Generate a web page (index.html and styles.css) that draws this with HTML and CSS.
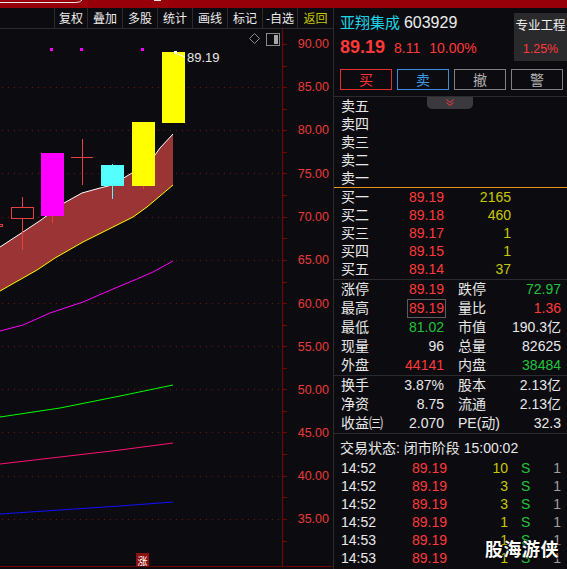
FILE: index.html
```html
<!DOCTYPE html>
<html lang="zh">
<head>
<meta charset="utf-8">
<link rel="stylesheet" href="styles.css">
</head>
<body>
<div class="topbar">
  <svg width="567" height="8" viewBox="0 0 567 8"><path d="M0 2.5 H76 Q80 2.5 82 0" stroke="#e8e8e8" stroke-width="1" fill="none"/><rect x="154" y="0" width="7" height="1" fill="#e8e8e8"/></svg>
</div>
<div class="main">
  <div class="left">
    <div class="toolbar">
      <span class="tb w33">复权</span><span class="tb">叠加</span><span class="tb">多股</span><span class="tb">统计</span><span class="tb">画线</span><span class="tb">标记</span><span class="tb">-自选</span><span class="tb back">返回</span>
    </div>
    <svg class="chart" width="333" height="540" viewBox="0 29 333 540">
      <g class="grid" stroke="#6a1414" stroke-width="1" stroke-dasharray="1 5">
        <line x1="2" y1="87.5" x2="282" y2="87.5"/>
        <line x1="2" y1="130.5" x2="282" y2="130.5"/>
        <line x1="2" y1="173.5" x2="282" y2="173.5"/>
        <line x1="2" y1="217.5" x2="282" y2="217.5"/>
        <line x1="2" y1="260.5" x2="282" y2="260.5"/>
        <line x1="2" y1="303.5" x2="282" y2="303.5"/>
        <line x1="2" y1="346.5" x2="282" y2="346.5"/>
        <line x1="2" y1="389.5" x2="282" y2="389.5"/>
        <line x1="2" y1="432.5" x2="282" y2="432.5"/>
        <line x1="2" y1="476.5" x2="282" y2="476.5"/>
        <line x1="2" y1="519.5" x2="282" y2="519.5"/>
      </g>
      <polygon points="0,247 23,232 41,220 64,203 82,193 100,188 112,185 132,173 150,162 160,148 173,134 173,185 160,196 147,207 133,217 113,227 83,242 55,258 37,270 0,291" fill="#9b3434"/>
      <polyline points="0,247 23,232 41,220 64,203 82,193 100,188 112,185 132,173 150,162 160,148 173,134" fill="none" stroke="#ffffff" stroke-width="1"/>
      <polyline points="173,185 160,196 147,207 133,217 113,227 83,242 55,258 37,270 0,291" fill="none" stroke="#ffff00" stroke-width="1"/>
      <polyline points="0,331 23,325 50,313 83,302 113,289 137,279 153,272 173,261" fill="none" stroke="#ff00ff" stroke-width="1"/>
      <polyline points="0,417 60,408 120,396 173,385" fill="none" stroke="#00ff00" stroke-width="1"/>
      <polyline points="0,464 60,457 120,450 173,443" fill="none" stroke="#ff1070" stroke-width="1"/>
      <polyline points="0,514 60,510 120,506 173,502" fill="none" stroke="#1010ff" stroke-width="1"/>
      <rect x="-2" y="224.5" width="4.5" height="2" fill="none" stroke="#e84040"/>
      <line x1="22.5" y1="197" x2="22.5" y2="207.5" stroke="#e84040"/>
      <line x1="22.5" y1="218.5" x2="22.5" y2="250" stroke="#e84040"/>
      <rect x="11.5" y="207.5" width="22" height="11" fill="#0c0c10" stroke="#e84040"/>
      <line x1="52.5" y1="215" x2="52.5" y2="223" stroke="#e84040"/>
      <rect x="41" y="153" width="23" height="63" fill="#ff00ff"/>
      <line x1="71" y1="157.5" x2="93" y2="157.5" stroke="#e84040"/>
      <line x1="82.5" y1="139" x2="82.5" y2="185" stroke="#e84040"/>
      <line x1="112.5" y1="164" x2="112.5" y2="199" stroke="#55ffff"/>
      <rect x="101" y="165" width="23" height="21" fill="#55ffff"/>
      <line x1="143.5" y1="185" x2="143.5" y2="189" stroke="#e84040"/>
      <rect x="132" y="122" width="23" height="64" fill="#ffff00"/>
      <rect x="162" y="52" width="23" height="71" fill="#ffff00"/>
      <rect x="174" y="51" width="3" height="2" fill="#ffffff"/>
      <polyline points="174,53.5 178,54 185,57" fill="none" stroke="#ffffff" stroke-width="1"/>
      <text x="187" y="57" class="peak">89.19</text>
      <rect x="50" y="48" width="3" height="3" fill="#ff00ff"/>
      <rect x="80" y="48" width="3" height="3" fill="#ff00ff"/>
      <rect x="141" y="48" width="3" height="3" fill="#ff00ff"/>
      <path d="M254.5 33.5 L259.5 38.5 L254.5 43.5 L249.5 38.5 Z" fill="none" stroke="#8a8a8a"/>
      <rect x="266.5" y="33.5" width="13" height="12" fill="none" stroke="#8a8a8a"/>
      <rect x="274" y="35" width="4" height="9" fill="#a8a8a8"/>
      <line x1="282.5" y1="29" x2="282.5" y2="567" stroke="#7a0000"/>
      <line x1="0" y1="566.5" x2="333" y2="566.5" stroke="#6a0000"/>
      <g stroke="#7a0000">
        <line x1="283" y1="44.5" x2="287" y2="44.5"/><line x1="283" y1="66.5" x2="287" y2="66.5"/>
        <line x1="283" y1="87.5" x2="287" y2="87.5"/><line x1="283" y1="109.5" x2="287" y2="109.5"/>
        <line x1="283" y1="130.5" x2="287" y2="130.5"/><line x1="283" y1="152.5" x2="287" y2="152.5"/>
        <line x1="283" y1="173.5" x2="287" y2="173.5"/><line x1="283" y1="195.5" x2="287" y2="195.5"/>
        <line x1="283" y1="217.5" x2="287" y2="217.5"/><line x1="283" y1="238.5" x2="287" y2="238.5"/>
        <line x1="283" y1="260.5" x2="287" y2="260.5"/><line x1="283" y1="282.5" x2="287" y2="282.5"/>
        <line x1="283" y1="303.5" x2="287" y2="303.5"/><line x1="283" y1="325.5" x2="287" y2="325.5"/>
        <line x1="283" y1="346.5" x2="287" y2="346.5"/><line x1="283" y1="368.5" x2="287" y2="368.5"/>
        <line x1="283" y1="389.5" x2="287" y2="389.5"/><line x1="283" y1="411.5" x2="287" y2="411.5"/>
        <line x1="283" y1="432.5" x2="287" y2="432.5"/><line x1="283" y1="454.5" x2="287" y2="454.5"/>
        <line x1="283" y1="476.5" x2="287" y2="476.5"/><line x1="283" y1="497.5" x2="287" y2="497.5"/>
        <line x1="283" y1="519.5" x2="287" y2="519.5"/><line x1="283" y1="541.5" x2="287" y2="541.5"/>
      </g>
      <g class="axis-labels">
        <text x="329" y="44">90.00</text>
        <text x="329" y="87">85.00</text>
        <text x="329" y="130">80.00</text>
        <text x="329" y="174">75.00</text>
        <text x="329" y="217">70.00</text>
        <text x="329" y="260">65.00</text>
        <text x="329" y="304">60.00</text>
        <text x="329" y="347">55.00</text>
        <text x="329" y="390">50.00</text>
        <text x="329" y="433">45.00</text>
        <text x="329" y="476">40.00</text>
        <text x="329" y="519">35.00</text>
      </g>
      <rect x="136" y="553" width="13" height="13" fill="#8b1010"/>
      <text x="142.5" y="560" class="zhang">涨</text>
    </svg>
  </div>
  <div class="panel">
    <div class="head">
      <div class="head-left">
        <div class="name-line"><span class="name">亚翔集成</span> <span class="code">603929</span></div>
        <div class="price-line"><span class="last">89.19</span><span class="chg">8.11</span><span class="chg">10.00%</span></div>
      </div>
      <div class="sector">
        <div class="sector-name">专业工程</div>
        <div class="sector-pct">1.25%</div>
      </div>
    </div>
    <div class="actions">
      <span class="act buy">买</span><span class="act sell">卖</span><span class="act cancel">撤</span><span class="act cancel">警</span>
    </div>
    <div class="book asks">
      <div class="tab"><svg width="12" height="8" viewBox="0 0 12 8"><path d="M2.5 0.5 L6 3.5 L9.5 0.5 M2.5 3.5 L6 6.5 L9.5 3.5" fill="none" stroke="#ff3838" stroke-width="1"/></svg></div>
      <div class="brow"><span>卖五</span><span></span><span></span></div>
      <div class="brow"><span>卖四</span><span></span><span></span></div>
      <div class="brow"><span>卖三</span><span></span><span></span></div>
      <div class="brow"><span>卖二</span><span></span><span></span></div>
      <div class="brow"><span>卖一</span><span></span><span></span></div>
    </div>
    <div class="book bids">
      <div class="brow"><span>买一</span><span class="up r">89.19</span><span class="vol r">2165</span></div>
      <div class="brow"><span>买二</span><span class="up r">89.18</span><span class="vol r">460</span></div>
      <div class="brow"><span>买三</span><span class="up r">89.17</span><span class="vol r">1</span></div>
      <div class="brow"><span>买四</span><span class="up r">89.15</span><span class="vol r">1</span></div>
      <div class="brow"><span>买五</span><span class="up r">89.14</span><span class="vol r">37</span></div>
    </div>
    <div class="stats">
      <div class="srow"><span>涨停</span><span class="up r">89.19</span><span>跌停</span><span class="down r">72.97</span></div>
      <div class="srow"><span>最高</span><span class="r"><span class="boxed">89.19</span></span><span>量比</span><span class="up r">1.36</span></div>
      <div class="srow"><span>最低</span><span class="down r">81.02</span><span>市值</span><span class="r">190.3亿</span></div>
      <div class="srow"><span>现量</span><span class="r">96</span><span>总量</span><span class="r">82625</span></div>
      <div class="srow"><span>外盘</span><span class="up r">44141</span><span>内盘</span><span class="down r">38484</span></div>
    </div>
    <div class="stats">
      <div class="srow"><span>换手</span><span class="r">3.87%</span><span>股本</span><span class="r">2.13亿</span></div>
      <div class="srow"><span>净资</span><span class="r">8.75</span><span>流通</span><span class="r">2.13亿</span></div>
      <div class="srow"><span>收益㈢</span><span class="r">2.070</span><span>PE(动)</span><span class="r">32.3</span></div>
    </div>
    <div class="status">交易状态: 闭市阶段 15:00:02</div>
    <div class="trades">
      <div class="trow"><span>14:52</span><span class="up r">89.19</span><span class="vol r">10</span><span class="s">S</span><span class="n r">1</span></div>
      <div class="trow"><span>14:52</span><span class="up r">89.19</span><span class="vol r">3</span><span class="s">S</span><span class="n r">1</span></div>
      <div class="trow"><span>14:52</span><span class="up r">89.19</span><span class="vol r">3</span><span class="s">S</span><span class="n r">1</span></div>
      <div class="trow"><span>14:52</span><span class="up r">89.19</span><span class="vol r">1</span><span class="s">S</span><span class="n r">1</span></div>
      <div class="trow"><span>14:53</span><span class="up r">89.19</span><span class="vol r">1</span><span class="s">S</span><span class="n r">1</span></div>
      <div class="trow"><span>14:53</span><span class="up r">89.19</span><span class="vol r">1</span><span class="s">S</span><span class="n r">1</span></div>
    </div>
    <div class="watermark">股海游侠</div>
  </div>
</div>
</body>
</html>
```

FILE: styles.css
```css
html, body {
  margin: 0;
  padding: 0;
}
body {
  width: 567px;
  height: 569px;
  overflow: hidden;
  background: #0c0c10;
  color: #e8e8e8;
  font-family: "Liberation Sans", "Noto Sans CJK SC", sans-serif;
}
.topbar {
  height: 8px;
  background: #970008;
}
.topbar svg { display: block; }
.main {
  display: flex;
  height: 561px;
}
.left {
  width: 333px;
  display: flex;
  flex-direction: column;
}
.toolbar {
  height: 20px;
  border-bottom: 1px solid #2c2c30;
  display: flex;
  justify-content: flex-end;
}
.tb {
  width: 34px;
  border-left: 1px solid #2c2c30;
  font-size: 12px;
  line-height: 20px;
  text-align: center;
  color: #ececec;
  font-family: "Noto Sans CJK SC", sans-serif;
}
.tb.w33 { width: 32px; }
.tb.back { width: 35px; color: #c8c800; }
.chart { display: block; }
.axis-labels text {
  font-family: "Liberation Sans", sans-serif;
  font-size: 12.5px;
  fill: #e83a3a;
  text-anchor: end;
  dominant-baseline: central;
}
.peak {
  font-family: "Liberation Sans", sans-serif;
  font-size: 13px;
  fill: #e6e6e6;
  dominant-baseline: central;
}
.zhang {
  font-family: "Noto Sans CJK SC", sans-serif;
  font-size: 10px;
  fill: #ffffff;
  text-anchor: middle;
  dominant-baseline: central;
}
.panel {
  position: relative;
  width: 233px;
  border-left: 1px solid #2c2c30;
  font-size: 14px;
}
.head {
  display: flex;
  justify-content: space-between;
  height: 53px;
  padding-top: 3px;
}
.head-left { padding-left: 6px; }
.name-line {
  height: 22px;
  line-height: 22px;
  white-space: nowrap;
}
.name { color: #1ed6e6; font-size: 15px; font-family: "Noto Sans CJK SC", sans-serif; }
.code { color: #ececec; font-size: 16px; }
.price-line {
  height: 28px;
  line-height: 28px;
  color: #ff3838;
  white-space: nowrap;
}
.last { font-size: 18px; font-weight: bold; margin-right: 9px; }
.chg { font-size: 14px; margin-right: 9px; }
.sector {
  width: 53px;
  height: 48px;
  margin-top: 2px;
  background: #2a2a2c;
  text-align: center;
  font-size: 12.5px;
}
.sector-name {
  line-height: 14px;
  padding-top: 5px;
  color: #f0f0f0;
  font-family: "Noto Sans CJK SC", sans-serif;
}
.sector-pct {
  line-height: 14px;
  padding-top: 10px;
  color: #ff3838;
}
.actions {
  display: flex;
  gap: 5px;
  padding: 5px 0 0 6px;
  height: 21px;
  margin-bottom: 6px;
}
.act {
  width: 50px;
  height: 19px;
  line-height: 19px;
  text-align: center;
  font-size: 14px;
  font-family: "Noto Sans CJK SC", sans-serif;
  border: 1px solid #808080;
  color: #b0b0b0;
}
.act.buy { border-color: #e03030; color: #ff3030; }
.act.sell { border-color: #3a8ee0; color: #3a9ae8; }
.book {
  position: relative;
  border-top: 1px solid #2c2c30;
}
.bids { border-top: 1px solid #e89020; padding-bottom: 1px; }
.tab {
  position: absolute;
  left: 93px;
  top: 0;
  width: 46px;
  height: 12px;
  background: #3a3a3e;
  border-radius: 0 0 5px 5px;
  display: flex;
  justify-content: center;
  align-items: center;
}
.tab svg { display: block; }
.brow {
  display: grid;
  grid-template-columns: 62px 41px 67px;
  padding-left: 7px;
  height: 18px;
  line-height: 18px;
}
.up { color: #ff3838; }
.down { color: #22c33c; }
.vol { color: #c8c800; }
.r { text-align: right; }
.stats {
  border-top: 1px solid #2c2c30;
}
.srow {
  display: grid;
  grid-template-columns: 45px 58px 59px 58px;
  padding-left: 7px;
  height: 19px;
  line-height: 19px;
  white-space: nowrap;
}
.srow > span:nth-child(3) { margin-left: 14px; }
.boxed {
  display: inline-block;
  color: #ff3838;
  border: 1px solid #5c5c60;
  line-height: 17px;
  padding: 0 1px;
  margin-right: -2px;
}
.status {
  border-top: 1px solid #2c2c30;
  line-height: 22px;
  padding: 3px 0 0 6px;
  box-sizing: border-box;
  height: 26px;
  white-space: nowrap;
}
.trow {
  display: grid;
  grid-template-columns: 45px 61px 61px 33px 20px;
  padding-left: 7px;
  height: 18px;
  line-height: 18px;
}
.trow .s { color: #22c33c; padding-left: 13px; }
.trow .n { color: #a0a0a0; }
.watermark {
  position: absolute;
  left: 151px;
  top: 527px;
  font-size: 18px;
  font-weight: bold;
  color: #ffffff;
  font-family: "Noto Sans CJK SC", sans-serif;
  letter-spacing: 0.5px;
  text-shadow: 0 0 3px #000, 1px 1px 2px #000;
}
```
